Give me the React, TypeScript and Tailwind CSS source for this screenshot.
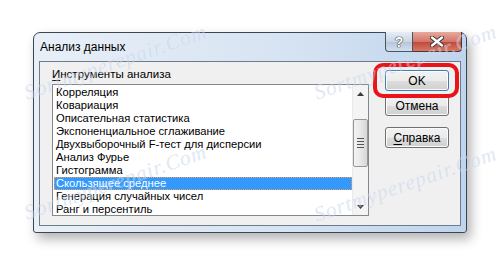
import React from "react"

const tools = [
  "Корреляция",
  "Ковариация",
  "Описательная статистика",
  "Экспоненциальное сглаживание",
  "Двухвыборочный F-тест для дисперсии",
  "Анализ Фурье",
  "Гистограмма",
  "Скользящее среднее",
  "Генерация случайных чисел",
  "Ранг и персентиль",
]

const SELECTED = 7

const btn =
  "h-[21px] w-[64px] rounded-[3px] border border-[#707070] bg-[linear-gradient(to_bottom,#f2f2f2_0%,#ebebeb_50%,#dddddd_51%,#cfcfcf_100%)] text-[12px] text-black flex items-center justify-center shadow-[inset_0_0_0_1px_#fcfcfc]"

function Watermark({ className }: { className: string }) {
  return (
    <div
      className={
        "absolute pointer-events-none italic text-[21px] tracking-[1px] text-[#c3d2ec] opacity-50 origin-left -rotate-[19deg] whitespace-nowrap " +
        className
      }
      style={{ fontFamily: '"Liberation Serif", serif', textShadow: "0 0 1px #fff" }}
    >
      Sortmyperepair.Com
    </div>
  )
}

export default function App() {
  return (
    <div
      className="relative w-[500px] h-[266px] bg-white overflow-hidden"
      style={{ fontFamily: '"Liberation Sans", Arial, sans-serif' }}
    >
      {/* dialog window */}
      <div className="absolute left-[33px] top-[32px] w-[434px] h-[201px] rounded-t-[7px] rounded-b-[3px] border border-[#3c4652] bg-[linear-gradient(to_right,#e8eff7,#d6e3f2_60%,#bfd4ed)] shadow-[4px_6px_12px_rgba(0,0,0,0.3)] flex flex-col">
        {/* title bar */}
        <div className="h-[28px] flex items-start justify-between">
          <div className="pl-[6px] pt-[8px] text-[12px] text-black leading-none">Анализ данных</div>
          <div className="flex mr-[4px] -mt-px">
            <div className="w-[28px] h-[20px] rounded-bl-[4px] border border-[#4a5564] border-t-0 bg-[linear-gradient(to_bottom,#e6edf5,#c9d6e6_50%,#b4c4d9_51%,#d2dfee)] flex items-center justify-center">
              <span className="text-[14px] font-bold text-white leading-none" style={{ textShadow: "0 0 1px #333, 0 0 1px #333, 0 0 1px #333" }}>?</span>
            </div>
            <div className="w-[49px] h-[20px] rounded-br-[4px] border border-[#4a3434] border-t-0 border-l-0 bg-[linear-gradient(to_bottom,#e8a99c,#d4756a_50%,#c0453a_51%,#d77a62)] flex items-center justify-center">
              <svg width="14" height="11" viewBox="0 0 14 11">
                <path d="M2 1.5 L12 9.5 M12 1.5 L2 9.5" stroke="#333" strokeWidth="4.2" strokeLinecap="round" />
                <path d="M2 1.5 L12 9.5 M12 1.5 L2 9.5" stroke="#fff" strokeWidth="2.4" strokeLinecap="round" />
              </svg>
            </div>
          </div>
        </div>

        {/* client area */}
        <div className="mx-[5px] h-[165px] border border-[#6d7b8a] bg-[#f0f0f0] flex">
          <div className="pl-[12px] pt-[4px]">
            <div className="text-[11.5px] leading-[16px] text-black">
              <span className="underline underline-offset-2">И</span>нструменты анализа
            </div>
            <div className="mt-[2px] w-[317px] h-[132px] border border-[#828790] bg-white flex">
              <div className="flex-1 pt-px pl-px">
                {tools.map((t, i) => (
                  <div
                    key={t}
                    className={
                      "h-[13px] pl-[2px] text-[11.2px] leading-[13px] whitespace-nowrap " +
                      (i === SELECTED
                        ? "bg-[#3399ff] text-white outline outline-1 outline-dotted outline-[#f0a040] -outline-offset-1"
                        : "text-black")
                    }
                  >
                    {t}
                  </div>
                ))}
              </div>
              {/* scrollbar */}
              <div className="w-[16px] bg-[#f4f4f4] border-l border-[#eaeaea] flex flex-col items-center">
                <div className="h-[17px] w-full flex items-center justify-center">
                  <svg width="7" height="4" viewBox="0 0 7 4"><path d="M3.5 0 L7 4 L0 4 Z" fill="#3a3a3a" /></svg>
                </div>
                <div className="mt-[17px] w-[15px] h-[48px] rounded-[2px] border border-[#979797] bg-[linear-gradient(to_right,#f3f3f3,#e8e8e8_50%,#d6d6d6)] flex flex-col items-center justify-center gap-[2px]">
                  <div className="w-[7px] h-px bg-[#555]" />
                  <div className="w-[7px] h-px bg-[#555]" />
                  <div className="w-[7px] h-px bg-[#555]" />
                  <div className="w-[7px] h-px bg-[#555]" />
                </div>
                <div className="flex-1" />
                <div className="h-[17px] w-full flex items-center justify-center">
                  <svg width="7" height="4" viewBox="0 0 7 4"><path d="M0 0 L7 0 L3.5 4 Z" fill="#3a3a3a" /></svg>
                </div>
              </div>
            </div>
          </div>

          {/* buttons */}
          <div className="ml-[16px] pt-[8px] flex flex-col">
            <div className={btn + " !border-[#3c7fb1] shadow-[inset_0_0_0_1px_#9fe0f8]"}>OK</div>
            <div className={btn + " mt-[4px]"}>Отмена</div>
            <div className={btn + " mt-[11px]"}>
              <span className="underline underline-offset-2">С</span>правка
            </div>
          </div>
        </div>
      </div>

      {/* red highlight ring */}
      <div className="absolute left-[373px] top-[63px] w-[86px] h-[35px] rounded-[10px] border-[4px] border-[#e8141b]" />

      {/* watermarks */}
      <Watermark className="left-[25px] top-[78px]" />
      <Watermark className="left-[315px] top-[78px]" />
      <Watermark className="left-[25px] top-[198px]" />
      <Watermark className="left-[315px] top-[200px]" />
    </div>
  )
}
